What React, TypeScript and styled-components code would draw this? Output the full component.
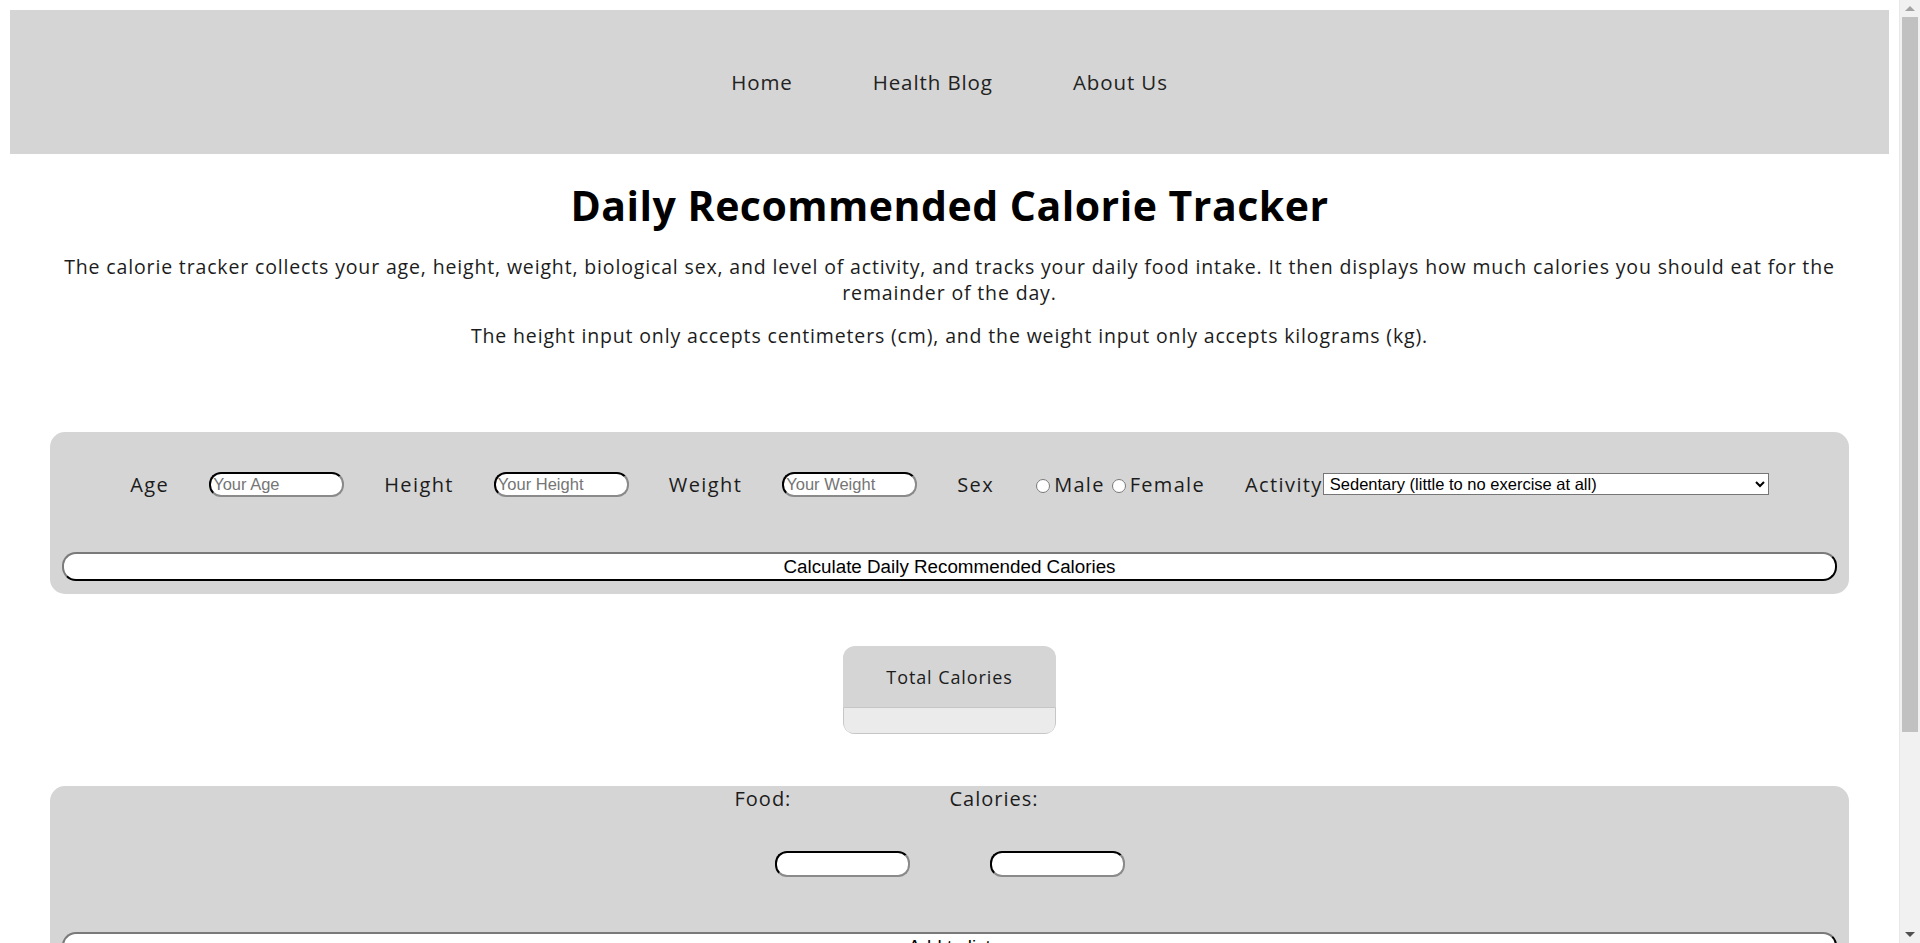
import React from 'react'
import styled, { createGlobalStyle } from 'styled-components'

const GlobalStyle = createGlobalStyle`
  html, body {
    background: #fff;
  }
  body {
    margin: 10px 31px 10px 10px;
    font-family: "Open Sans", "DejaVu Sans", sans-serif;
    color: #1c1c1c;
  }
`

// the browser's scrollbar in the shot, drawn over the right edge
const ScrollTrack = styled.div`
  position: fixed;
  top: 0;
  right: 0;
  width: 21px;
  height: 100vh;
  background: #f1f1f1;
  border-left: 1px solid #e8e8e8;
  box-sizing: border-box;
`
const ScrollThumb = styled.div`
  position: absolute;
  top: 17px;
  left: 2px;
  right: 2px;
  height: 715px;
  background: #c1c1c1;
`
const ScrollArrow = styled.div<{ $down?: boolean }>`
  position: absolute;
  left: 50%;
  ${p => (p.$down ? 'bottom: 6px;' : 'top: 6px;')}
  transform: translateX(-50%);
  width: 0;
  height: 0;
  border-left: 5px solid transparent;
  border-right: 5px solid transparent;
  ${p => (p.$down ? 'border-top: 5px solid #505050;' : 'border-bottom: 5px solid #a3a3a3;')}
`

const NavBar = styled.nav`
  height: 144px;
  background: #d5d5d5;
  display: flex;
  align-items: center;
  justify-content: center;
`
const NavLink = styled.a`
  padding: 0 40px;
  font-size: 20.5px;
  letter-spacing: 0.9px;
  color: #222;
  text-decoration: none;
  cursor: pointer;
`

const Intro = styled.header`
  text-align: center;
  padding: 26px 40px 0;
`
const Title = styled.h1`
  margin: 0;
  font-size: 41px;
  line-height: 50px;
  font-weight: 700;
  color: #000;
  letter-spacing: 0.5px;
`
const Para = styled.p`
  margin: 0;
  font-size: 19.5px;
  line-height: 26px;
  letter-spacing: 0.85px;
  color: #1c1c1c;
  & + & {
    margin-top: 17px;
  }
`
const ParaGroup = styled.div`
  margin-top: 24px;
`

const Panel = styled.section<{ $top: number }>`
  margin: ${p => p.$top}px 40px 0;
  background: #d5d5d5;
  border-radius: 15px;
  padding: 0 12px 13px;
`
const FieldRow = styled.div`
  display: flex;
  align-items: center;
  justify-content: center;
  height: 24px;
  padding-top: 40px;
  margin-bottom: 56px;
`
const Field = styled.div<{ $gap?: number; $last?: boolean }>`
  display: flex;
  align-items: center;
  gap: ${p => (p.$gap ?? 40)}px;
  margin-right: ${p => (p.$last ? 0 : 40)}px;
`
const Label = styled.label`
  font-size: 20px;
  letter-spacing: 1.4px;
  color: #1c1c1c;
  white-space: nowrap;
`
const TextInput = styled.input`
  box-sizing: border-box;
  width: 135px;
  height: 25px;
  padding: 1px 2px;
  border: 2px inset #767676;
  border-top-color: #3a3a3a;
  border-left-color: #3a3a3a;
  border-bottom-color: #8a8a8a;
  border-right-color: #8a8a8a;
  border-radius: 12px;
  background: #fff;
  font-family: "Liberation Sans", Arial, sans-serif;
  font-size: 16.5px;
  &::placeholder {
    color: #757575;
  }
`
const RadioGroup = styled.div`
  display: flex;
  align-items: center;
  font-size: 20px;
  letter-spacing: 1.3px;
  input {
    width: 14px;
    height: 14px;
    margin: 3px 4px 0 5px;
  }
  label + input {
    margin-left: 7px;
  }
`
const Select = styled.select`
  width: 446px;
  height: 22px;
  border: 1px solid #767676;
  border-radius: 0;
  background: #fff;
  font-family: "Liberation Sans", Arial, sans-serif;
  font-size: 16.5px;
  color: #000;
  padding: 0 2px;
`
const WideButton = styled.button`
  display: block;
  width: 100%;
  height: 29px;
  border: 2px outset #767676;
  border-top-color: #7a7a7a;
  border-left-color: #7a7a7a;
  border-bottom-color: #222;
  border-right-color: #222;
  border-radius: 14px;
  background: #fff;
  font-family: "Liberation Sans", Arial, sans-serif;
  font-size: 18.8px;
  color: #000;
  cursor: pointer;
`

const TotalBox = styled.div`
  width: 213px;
  margin: 52px auto 0;
  background: #d5d5d5;
  border-radius: 12px;
  overflow: hidden;
`
const TotalHead = styled.div`
  height: 61px;
  display: flex;
  align-items: center;
  justify-content: center;
  font-size: 18px;
  letter-spacing: 0.9px;
  color: #1c1c1c;
`
const TotalValue = styled.output`
  display: block;
  height: 27px;
  box-sizing: border-box;
  background: #ebebeb;
  border: 1px solid #c6c6c6;
  border-radius: 0 0 10px 10px;
`

const FoodRow = styled.div`
  display: flex;
  justify-content: center;
`
const FoodCol = styled.div`
  display: flex;
  flex-direction: column;
  align-items: flex-start;
`
const FoodLabel = styled.label`
  height: 26px;
  line-height: 26px;
  font-size: 20px;
  letter-spacing: 1px;
  color: #1c1c1c;
`
const FoodInput = styled(TextInput)`
  margin: 39px 40px 0;
  height: 26px;
`
const AddWrap = styled.div`
  margin-top: 55px;
`
const FoodList = styled.ul`
  list-style: none;
  margin: 0;
  padding: 0;
  min-height: 214px;
`

export default function App() {
  return (
    <>
      <GlobalStyle />
      <NavBar>
        <NavLink>Home</NavLink>
        <NavLink>Health Blog</NavLink>
        <NavLink>About Us</NavLink>
      </NavBar>

      <Intro>
        <Title>Daily Recommended Calorie Tracker</Title>
        <ParaGroup>
          <Para>
            The calorie tracker collects your age, height, weight, biological sex, and level of activity, and tracks your daily food intake. It then displays how much calories you should eat for the remainder of the day.
          </Para>
          <Para>
            The height input only accepts centimeters (cm), and the weight input only accepts kilograms (kg).
          </Para>
        </ParaGroup>
      </Intro>

      <Panel $top={83}>
        <FieldRow>
          <Field>
            <Label>Age</Label>
            <TextInput placeholder="Your Age" />
          </Field>
          <Field>
            <Label>Height</Label>
            <TextInput placeholder="Your Height" />
          </Field>
          <Field>
            <Label>Weight</Label>
            <TextInput placeholder="Your Weight" />
          </Field>
          <Field $gap={37}>
            <Label>Sex</Label>
            <RadioGroup>
              <input type="radio" name="sex" />
              <label>Male</label>
              <input type="radio" name="sex" />
              <label>Female</label>
            </RadioGroup>
          </Field>
          <Field $gap={0} $last>
            <Label>Activity</Label>
            <Select defaultValue="sedentary">
              <option value="sedentary">Sedentary (little to no exercise at all)</option>
              <option value="light">Lightly active (light exercise 1-3 days/week)</option>
              <option value="moderate">Moderately active (moderate exercise 3-5 days/week)</option>
              <option value="very">Very active (hard exercise 6-7 days/week)</option>
            </Select>
          </Field>
        </FieldRow>
        <WideButton>Calculate Daily Recommended Calories</WideButton>
      </Panel>

      <TotalBox>
        <TotalHead>Total Calories</TotalHead>
        <TotalValue />
      </TotalBox>

      <Panel $top={52}>
        <FoodRow>
          <FoodCol>
            <FoodLabel>Food:</FoodLabel>
            <FoodInput />
          </FoodCol>
          <FoodCol>
            <FoodLabel>Calories:</FoodLabel>
            <FoodInput />
          </FoodCol>
        </FoodRow>
        <AddWrap>
          <WideButton>Add to list</WideButton>
        </AddWrap>
        <FoodList />
      </Panel>

      <ScrollTrack aria-hidden>
        <ScrollArrow />
        <ScrollThumb />
        <ScrollArrow $down />
      </ScrollTrack>
    </>
  )
}
